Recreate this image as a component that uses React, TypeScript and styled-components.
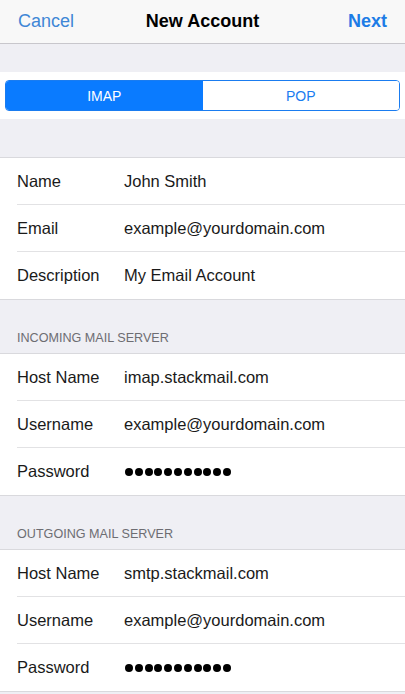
import React from "react";
import styled, { createGlobalStyle } from "styled-components";

const GlobalStyle = createGlobalStyle`
	html, body {
		margin: 0;
		padding: 0;
		background: #efeff4;
		font-family: "Liberation Sans", Arial, sans-serif;
		-webkit-font-smoothing: antialiased;
	}
`;

const accountFields = [
	{ label: "Name", value: "John Smith" },
	{ label: "Email", value: "example@yourdomain.com" },
	{ label: "Description", value: "My Email Account" },
];

const incomingFields = [
	{ label: "Host Name", value: "imap.stackmail.com" },
	{ label: "Username", value: "example@yourdomain.com" },
	{ label: "Password", value: "", secret: true },
];

const outgoingFields = [
	{ label: "Host Name", value: "smtp.stackmail.com" },
	{ label: "Username", value: "example@yourdomain.com" },
	{ label: "Password", value: "", secret: true },
];

type Field = { label: string; value: string; secret?: boolean };

function FieldGroup({ fields }: { fields: Field[] }) {
	return (
		<Group>
			{fields.map((f) => (
				<Row key={f.label}>
					<Label>{f.label}</Label>
					{f.secret ? (
						<Dots>
							{Array.from({ length: 11 }).map((_, i) => (
								<Dot key={i} />
							))}
						</Dots>
					) : (
						<Value>{f.value}</Value>
					)}
				</Row>
			))}
		</Group>
	);
}

function App() {
	return (
		<Screen>
			<GlobalStyle />
			<NavBar>
				<NavButton>Cancel</NavButton>
				<Title>New Account</Title>
				<NavButton $primary>Next</NavButton>
			</NavBar>

			<Spacer $height={28} />

			<SegmentBand>
				<Segmented>
					<Segment $active>IMAP</Segment>
					<Segment>POP</Segment>
				</Segmented>
			</SegmentBand>

			<Spacer $height={38} />

			<FieldGroup fields={accountFields} />

			<SectionHeader>Incoming Mail Server</SectionHeader>
			<FieldGroup fields={incomingFields} />

			<SectionHeader>Outgoing Mail Server</SectionHeader>
			<FieldGroup fields={outgoingFields} />
		</Screen>
	);
}

const Screen = styled.div`
	width: 405px;
	min-height: 694px;
	background: #efeff4;
	overflow: hidden;
`;

const NavBar = styled.header`
	height: 43px;
	display: grid;
	grid-template-columns: 1fr auto 1fr;
	align-items: center;
	padding: 0 18px;
	background: #f8f8f8;
	border-bottom: 1px solid #c8c7cc;
`;

const NavButton = styled.span<{ $primary?: boolean }>`
	font-size: 18px;
	color: ${({ $primary }) => ($primary ? "#1d7ce6" : "#3f87d6")};
	font-weight: ${({ $primary }) => ($primary ? 700 : 400)};
	justify-self: ${({ $primary }) => ($primary ? "end" : "start")};
`;

const Title = styled.h1`
	margin: 0;
	font-size: 18px;
	font-weight: 700;
	color: #000;
`;

const Spacer = styled.div<{ $height: number }>`
	height: ${({ $height }) => $height}px;
`;

const SegmentBand = styled.div`
	height: 47px;
	background: #fff;
	display: flex;
	align-items: center;
	padding: 0 5px;
`;

const Segmented = styled.div`
	flex: 1;
	height: 31px;
	display: flex;
	border: 1px solid #1a7cf0;
	border-radius: 4px;
	overflow: hidden;
	box-sizing: border-box;
`;

const Segment = styled.div<{ $active?: boolean }>`
	flex: 1;
	display: flex;
	align-items: center;
	justify-content: center;
	font-size: 14px;
	color: ${({ $active }) => ($active ? "#fff" : "#1a7cf0")};
	background: ${({ $active }) => ($active ? "#0a7bff" : "#fff")};
`;

const SectionHeader = styled.div`
	height: 53px;
	box-sizing: border-box;
	display: flex;
	align-items: flex-end;
	padding: 0 17px 8px;
	font-size: 12.6px;
	text-transform: uppercase;
	color: #6d6d72;
`;

const Group = styled.section`
	background: #fff;
	border-top: 1px solid #d9d9dd;
	border-bottom: 1px solid #d9d9dd;
`;

const Row = styled.div`
	height: 47px;
	display: flex;
	align-items: center;
	margin-left: 17px;
	box-sizing: border-box;

	&:not(:last-child) {
		border-bottom: 1px solid #e2e2e4;
	}
`;

const Label = styled.span`
	width: 107px;
	flex-shrink: 0;
	font-size: 16.5px;
	color: #1a1a1a;
`;

const Value = styled.span`
	font-size: 16.5px;
	color: #1a1a1a;
`;

const Dots = styled.span`
	display: flex;
	gap: 1.8px;
	padding-left: 1px;
`;

const Dot = styled.span`
	width: 8px;
	height: 8px;
	border-radius: 50%;
	background: #000;
`;

export default App;
